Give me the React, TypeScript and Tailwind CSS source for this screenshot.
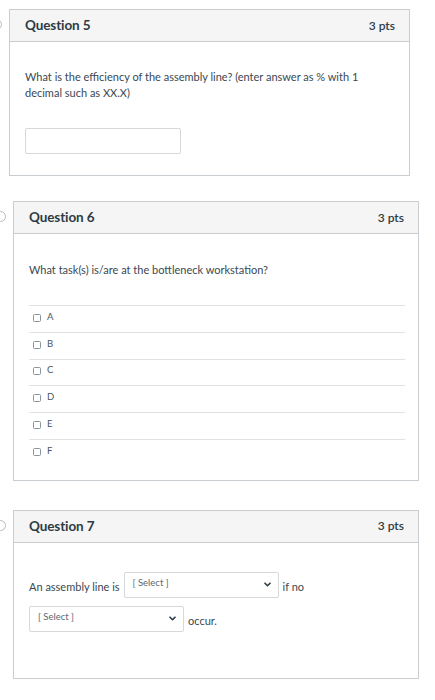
import React from "react";

const font = { fontFamily: "Lato, 'Noto Sans', 'Liberation Sans', sans-serif" };

function Circle({ top }: { top: number }) {
  return (
    <div
      className="absolute left-[-19px] w-[11px] h-[11px] rounded-full border border-[#b5bcc2] bg-white"
      style={{ top }}
    />
  );
}

function Header({ title }: { title: string }) {
  return (
    <div className="h-[32px] bg-[#f5f5f5] border-b border-[#c7cdd1] flex items-center justify-between pl-[15px] pr-[14px]">
      <span className="text-[13.5px] font-bold text-[#2d3b45] tracking-[-0.1px]">{title}</span>
      <span className="text-[12px] font-semibold text-[#2d3b45]">3 pts</span>
    </div>
  );
}

function Chevron() {
  return (
    <svg width="7" height="5" viewBox="0 0 7 5" className="shrink-0">
      <path d="M1 1.2 L3.5 3.7 L6 1.2" fill="none" stroke="#2d3b45" strokeWidth="1.6" strokeLinecap="round" strokeLinejoin="round" />
    </svg>
  );
}

function Select({ width }: { width: number }) {
  return (
    <div
      className="h-[26px] border border-[#d5d9dc] rounded-[2px] bg-white flex items-center justify-between pl-[8px] pr-[7px]"
      style={{ width }}
    >
      <span className="text-[9.5px] text-[#5b6770] -mt-[4px]">[ Select ]</span>
      <Chevron />
    </div>
  );
}

export default function App() {
  const opts = ["A", "B", "C", "D", "E", "F"];
  return (
    <div className="w-[435px] h-[700px] bg-white overflow-hidden" style={font}>
      {/* Question 5 */}
      <div className="relative ml-[9px] mt-[9px] w-[401px] border border-[#c7cdd1]">
        <Circle top={9} />
        <Header title="Question 5" />
        <div className="pl-[15px] pr-[15px] pt-[27px] pb-[21px]">
          <p className="text-[11px] leading-[16px] text-[#3a4852]">
            What is the efficiency of the assembly line? (enter answer as % with 1
            <br />
            decimal such as XX.X)
          </p>
          <div className="mt-[27px] w-[156px] h-[26px] border border-[#d5d9dc] rounded-[2px]" />
        </div>
      </div>

      {/* Question 6 */}
      <div className="relative ml-[13px] mt-[25px] w-[406px] border border-[#c7cdd1]">
        <Circle top={9} />
        <Header title="Question 6" />
        <div className="pl-[15px] pr-[13px] pt-[28px] pb-[14px]">
          <p className="text-[11px] leading-[16px] text-[#3a4852]">
            What task(s) is/are at the bottleneck workstation?
          </p>
          <div className="mt-[27px]">
            {opts.map((o) => (
              <div
                key={o}
                className="h-[26.8px] flex items-center pl-[4px] border-t border-[#dfe2e5]"
              >
                <span className="w-[8px] h-[8px] border border-[#8a949b] rounded-[1.5px] -mt-[2px]" />
                <span className="ml-[6px] text-[9.5px] text-[#4a565f] -mt-[4px]">{o}</span>
              </div>
            ))}
          </div>
        </div>
      </div>

      {/* Question 7 */}
      <div className="relative ml-[13px] mt-[29px] w-[406px] h-[169px] border border-[#c7cdd1]">
        <Circle top={9} />
        <Header title="Question 7" />
        <div className="pl-[15px] pr-[13px] pt-[29px]">
          <div className="flex items-center">
            <span className="text-[11px] text-[#3a4852] mt-[5px]">An assembly line is</span>
            <div className="ml-[4px]">
              <Select width={155} />
            </div>
            <span className="ml-[4px] text-[11px] text-[#3a4852] mt-[5px]">if no</span>
          </div>
          <div className="flex items-center mt-[8px]">
            <Select width={155} />
            <span className="ml-[4px] text-[11px] text-[#3a4852] mt-[5px]">occur.</span>
          </div>
        </div>
      </div>
    </div>
  );
}
